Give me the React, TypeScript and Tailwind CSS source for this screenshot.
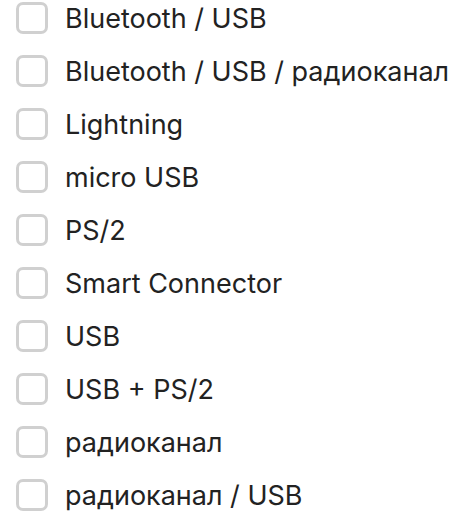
import React from "react";

const items = [
  "Bluetooth / USB",
  "Bluetooth / USB / радиоканал",
  "Lightning",
  "micro USB",
  "PS/2",
  "Smart Connector",
  "USB",
  "USB + PS/2",
  "радиоканал",
  "радиоканал / USB",
];

export default function App() {
  return (
    <div className="w-[475px] h-[525px] bg-white overflow-hidden" style={{ fontFamily: "Inter, 'Noto Sans', sans-serif" }}>
      <div className="flex flex-col gap-[21px] pt-[2px] pl-[16px]">
        {items.map((t) => (
          <label key={t} className="flex items-center h-[32px] gap-[17px]">
            <span className="w-[32px] h-[32px] rounded-[7px] border-[3px] border-[#d0d0d0] bg-white shrink-0" />
            <span className="text-[27px] text-[#222222] leading-none">{t}</span>
          </label>
        ))}
      </div>
    </div>
  );
}
